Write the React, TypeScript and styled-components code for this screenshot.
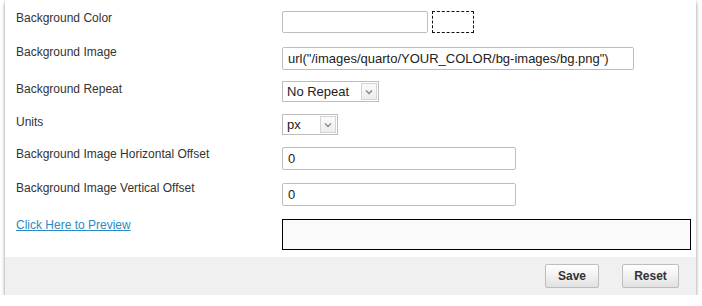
import React from "react";
import styled, { createGlobalStyle } from "styled-components";

const Global = createGlobalStyle`
  html, body { margin: 0; padding: 0; background: #ffffff; }
  body { font-family: "Liberation Sans", Arial, sans-serif; }
`;

const Panel = styled.div`
  margin-left: 5px;
  width: 691px;
  background: #ffffff;
  box-shadow: 0 3px 4px rgba(0, 0, 0, 0.35), 0 0 2px rgba(0, 0, 0, 0.18);
`;

const Form = styled.div`
  padding: 11px 0 7px 11px;
  display: flex;
  flex-direction: column;
`;

const Row = styled.div<{ $h: number }>`
  display: grid;
  grid-template-columns: 266px 1fr;
  align-items: start;
  height: ${(p) => p.$h}px;
`;

const Label = styled.div<{ $dy?: number }>`
  font-size: 12px;
  line-height: 14px;
  color: #333333;
  margin-top: ${(p) => p.$dy ?? 0}px;
`;

const LinkLabel = styled.a`
  font-size: 12px;
  line-height: 14px;
  color: #2a8bc4;
  text-decoration: underline;
  cursor: pointer;
`;

const Controls = styled.div`
  display: flex;
  align-items: flex-start;
  gap: 4px;
`;

const TextInput = styled.div<{ $w: number; $h?: number }>`
  box-sizing: border-box;
  width: ${(p) => p.$w}px;
  height: ${(p) => p.$h ?? 23}px;
  border: 1px solid #bdbdbd;
  border-radius: 2px;
  background: #ffffff;
  font-size: 13px;
  color: #222222;
  padding-left: 5px;
  display: flex;
  align-items: center;
  white-space: nowrap;
`;

const Swatch = styled.div`
  box-sizing: border-box;
  width: 42px;
  height: 22px;
  border: 1px dashed #111111;
`;

const SelectBox = styled.div<{ $w: number }>`
  box-sizing: border-box;
  width: ${(p) => p.$w}px;
  height: 21px;
  border: 1px solid #bdbdbd;
  background: #ffffff;
  display: flex;
  align-items: center;
  justify-content: space-between;
  padding: 0 1px 0 4px;
  font-size: 13px;
  color: #222222;
`;

const ArrowBox = styled.div`
  box-sizing: border-box;
  width: 16px;
  height: 17px;
  border: 1px solid #d4d4d4;
  background: linear-gradient(#fbfbfb, #ececec);
  display: flex;
  align-items: center;
  justify-content: center;
`;

const Preview = styled.div`
  box-sizing: border-box;
  width: 409px;
  height: 31px;
  border: 1px solid #000000;
  background: #fafafa;
`;

const Footer = styled.div`
  height: 38px;
  background: #f0f0f0;
  display: flex;
  align-items: center;
  justify-content: flex-end;
  gap: 23px;
  padding-right: 17px;
`;

const Button = styled.button<{ $w: number }>`
  box-sizing: border-box;
  width: ${(p) => p.$w}px;
  height: 24px;
  border: 1px solid #bdbdbd;
  border-radius: 2px;
  background: linear-gradient(#ffffff, #e2e2e2);
  font-family: "Liberation Sans", Arial, sans-serif;
  font-weight: bold;
  font-size: 12px;
  color: #333333;
  padding: 0;
`;

const Chevron = () => (
  <svg width="8" height="6" viewBox="0 0 8 6">
    <path d="M1 1.5 L4 4.5 L7 1.5" fill="none" stroke="#7a8a99" strokeWidth="1.4" />
  </svg>
);

const Select = ({ value, w }: { value: string; w: number }) => (
  <SelectBox $w={w}>
    <span>{value}</span>
    <ArrowBox>
      <Chevron />
    </ArrowBox>
  </SelectBox>
);

export default function App() {
  return (
    <>
      <Global />
      <Panel>
        <Form>
          <Row $h={36}>
            <Label $dy={0}>Background Color</Label>
            <Controls>
              <TextInput $w={146} $h={22} />
              <Swatch />
            </Controls>
          </Row>
          <Row $h={34}>
            <Label $dy={-2}>Background Image</Label>
            <Controls>
              <TextInput $w={352}>url("/images/quarto/YOUR_COLOR/bg-images/bg.png")</TextInput>
            </Controls>
          </Row>
          <Row $h={33}>
            <Label $dy={1}>Background Repeat</Label>
            <Controls>
              <Select value="No Repeat" w={97} />
            </Controls>
          </Row>
          <Row $h={33}>
            <Label $dy={1}>Units</Label>
            <Controls>
              <Select value="px" w={56} />
            </Controls>
          </Row>
          <Row $h={36}>
            <Label $dy={0}>Background Image Horizontal Offset</Label>
            <Controls>
              <TextInput $w={234}>0</TextInput>
            </Controls>
          </Row>
          <Row $h={36}>
            <Label $dy={-2}>Background Image Vertical Offset</Label>
            <Controls>
              <TextInput $w={234}>0</TextInput>
            </Controls>
          </Row>
          <Row $h={31}>
            <Label $dy={-1}>
              <LinkLabel>Click Here to Preview</LinkLabel>
            </Label>
            <Controls>
              <Preview />
            </Controls>
          </Row>
        </Form>
        <Footer>
          <Button $w={54}>Save</Button>
          <Button $w={57}>Reset</Button>
        </Footer>
      </Panel>
    </>
  );
}
